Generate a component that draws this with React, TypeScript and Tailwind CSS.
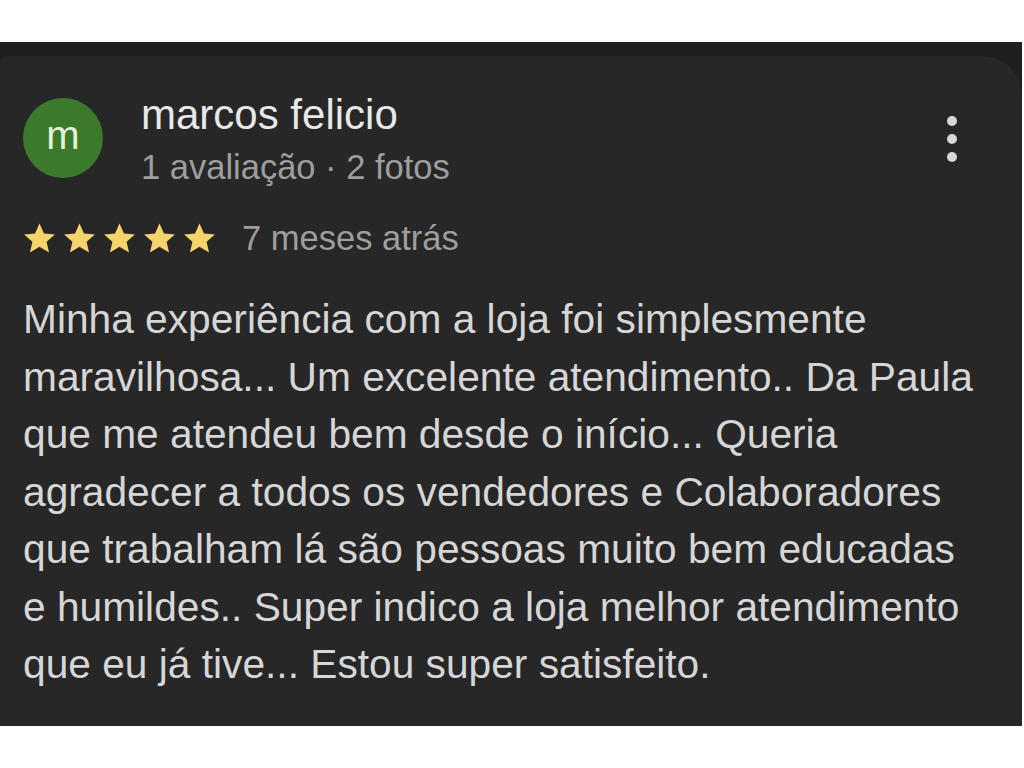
import React from "react";

const Star = () => (
  <svg width="39" height="37" viewBox="0 0 24 24" className="shrink-0">
    <path
      d="M12 2.2l2.9 6.6 7.1.6-5.4 4.7 1.6 7-6.2-3.7-6.2 3.7 1.6-7L2 9.4l7.1-.6z"
      fill="#f6d36b"
    />
  </svg>
);

export default function App() {
  const lines = [
    "Minha experiência com a loja foi simplesmente",
    "maravilhosa... Um excelente atendimento.. Da Paula",
    "que me atendeu bem desde o início... Queria",
    "agradecer a todos os vendedores e Colaboradores",
    "que trabalham lá são pessoas muito bem educadas",
    "e humildes.. Super indico a loja melhor atendimento",
    "que eu já tive... Estou super satisfeito.",
  ];
  return (
    <div
      className="w-[1024px] h-[768px] bg-white pt-[42px] overflow-hidden"
      style={{ fontFamily: "'Liberation Sans', Arial, sans-serif" }}
    >
      <div className="w-[1022px] h-[684px] bg-[#1f1f1f] pt-[14px]">
        <div className="h-[670px] bg-[#272727] rounded-tr-[40px] rounded-tl-[8px] pl-[23px] pr-[60px] pt-[42px]">
          <div className="flex items-start">
            <div className="w-[80px] h-[80px] rounded-full bg-[#3b7a2c] flex items-center justify-center text-[#e2f3da] text-[40px] leading-none pb-[6px]">
              m
            </div>
            <div className="ml-[38px] flex-1 -mt-[6px]">
              <div className="text-[42px] leading-[46px] text-[#e8e8e8]">marcos felicio</div>
              <div className="text-[34.5px] leading-[40px] text-[#9e9e9e] mt-[9px]">
                1 avaliação · 2 fotos
              </div>
            </div>
            <div className="flex flex-col gap-[8px] mt-[18px] mr-[5px]">
              <span className="w-[10px] h-[10px] rounded-full bg-[#d8d8d8]" />
              <span className="w-[10px] h-[10px] rounded-full bg-[#d8d8d8]" />
              <span className="w-[10px] h-[10px] rounded-full bg-[#d8d8d8]" />
            </div>
          </div>
          <div className="flex items-center mt-[33px] -ml-[3px]">
            <div className="flex gap-[1px]">
              <Star />
              <Star />
              <Star />
              <Star />
              <Star />
            </div>
            <span className="ml-[23px] text-[34.5px] text-[#9e9e9e] leading-none -mt-[1px]">7 meses atrás</span>
          </div>
          <div className="mt-[34px] text-[40.7px] leading-[57.5px] text-[#d6d6d6]">
            {lines.map((l, i) => (
              <div key={i} className="whitespace-nowrap">{l}</div>
            ))}
          </div>
        </div>
      </div>
    </div>
  );
}
